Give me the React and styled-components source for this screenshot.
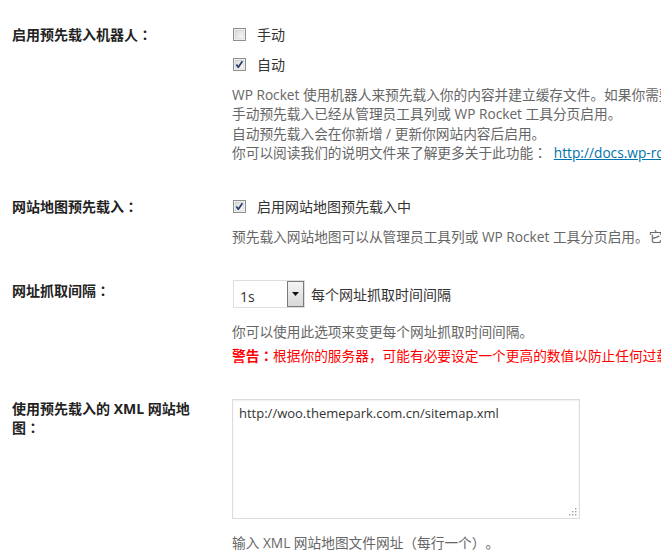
import React from 'react';
import styled, { createGlobalStyle } from 'styled-components';

const GlobalStyle = createGlobalStyle`
  html, body {
    margin: 0;
    padding: 0;
    background: #fff;
    overflow: hidden;
  }
  body {
    font-family: "Open Sans", "Noto Sans CJK SC", sans-serif;
    color: #333;
    text-spacing-trim: space-all;
  }
`;

const Page = styled.div`
  width: 661px;
  height: 558px;
  overflow: hidden;
  box-sizing: border-box;
  padding: 24px 0 0 12px;
`;

const Form = styled.div`
  display: flex;
  flex-direction: column;
  gap: 34px;
  width: 960px;
`;

const Row = styled.div`
  display: grid;
  grid-template-columns: 220px 1fr;
  align-items: start;
`;

const Label = styled.div`
  width: 182px;
  padding-top: 1px;
  font-size: 14px;
  line-height: 18px;
  font-weight: 700;
  color: #222;
`;

/* full-width colon drawn centred in its cell */
const Colon = styled.span`
  font-family: "Noto Sans CJK JP", "Noto Sans CJK SC", sans-serif;
`;

const Field = styled.div`
  display: flex;
  flex-direction: column;
`;

const Options = styled.div`
  display: flex;
  flex-direction: column;
  gap: 10px;
`;

const Option = styled.label`
  display: flex;
  align-items: center;
  gap: 11px;
  height: 20px;
  font-size: 14px;
  color: #333;
  padding-left: 1px;
`;

const Box = styled.svg`
  flex: none;
  display: block;
`;

const Checkbox = ({ checked }) => (
  <Box width="13" height="13" viewBox="0 0 13 13">
    <defs>
      <linearGradient id="cbfill" x1="0" y1="0" x2="1" y2="1">
        <stop offset="0" stopColor="#d9d9d9" />
        <stop offset="1" stopColor="#fbfbfb" />
      </linearGradient>
    </defs>
    <rect x="0.5" y="0.5" width="12" height="12" fill="#fff" stroke="#8e8f8f" />
    <rect x="2" y="2" width="9" height="9" fill="url(#cbfill)" stroke="#c4c4c4" strokeWidth="0.6" />
    {checked && (
      <path d="M3.4 6.4 L5.3 9.2 L9.4 3.2" fill="none" stroke="#2c3c72" strokeWidth="1.7" strokeLinejoin="round" />
    )}
  </Box>
);

const Notes = styled.div`
  display: flex;
  flex-direction: column;
  margin-top: ${(p) => p.$top || 11}px;
`;

const Note = styled.p`
  margin: 0;
  font-size: 13.7px;
  line-height: 19.3px;
  color: #666;
  white-space: nowrap;
`;

const Warning = styled(Note)`
  margin-top: 4px;
  color: #f00;
`;

const Strong = styled.strong`
  font-weight: 700;
`;

const Link = styled.a`
  color: #0073aa;
  text-decoration: underline;
  margin-left: 7px;
`;

const Inline = styled.div`
  display: flex;
  align-items: center;
  gap: 6px;
  font-size: 14px;
  color: #333;
`;

const Select = styled.div`
  display: flex;
  width: 72px;
  height: 28px;
  box-sizing: border-box;
  border: 1px solid #dedede;
  background: #fff;
  margin-left: 1px;
`;

const SelectValue = styled.span`
  flex: 1;
  padding: 6px 0 0 6px;
  font-size: 14px;
  line-height: 20px;
  color: #333;
`;

const SelectButton = styled.span`
  width: 17px;
  box-sizing: border-box;
  border: 1px solid #7a7a7a;
  background: linear-gradient(#f4f4f4, #d8d8d8);
  display: flex;
  align-items: center;
  justify-content: center;
`;

const TextWrap = styled.div`
  position: relative;
  width: 348px;
  height: 120px;
`;

const TextArea = styled.textarea`
  display: block;
  width: 100%;
  height: 100%;
  box-sizing: border-box;
  margin: 0;
  padding: 3px 6px;
  border: 1px solid #dcdcdc;
  box-shadow: inset 0 1px 2px rgba(0, 0, 0, 0.07);
  resize: none;
  outline: none;
  font-family: "Open Sans", "Noto Sans CJK SC", sans-serif;
  font-size: 13px;
  line-height: 20px;
  color: #333;
  background: #fff;
`;

const Grip = styled.svg`
  position: absolute;
  right: 3px;
  bottom: 3px;
`;

export default function App() {
  return (
    <>
      <GlobalStyle />
      <Page>
        <Form>
          <Row>
            <Label>启用预先载入机器人<Colon>：</Colon></Label>
            <Field>
              <Options>
                <Option>
                  <Checkbox />
                  手动
                </Option>
                <Option>
                  <Checkbox checked />
                  自动
                </Option>
              </Options>
              <Notes>
                <Note>WP Rocket 使用机器人来预先载入你的内容并建立缓存文件。如果你需要，可以停用此功能。</Note>
                <Note>手动预先载入已经从管理员工具列或 WP Rocket 工具分页启用。</Note>
                <Note>自动预先载入会在你新增 / 更新你网站内容后启用。</Note>
                <Note>
                  你可以阅读我们的说明文件来了解更多关于此功能<Colon>：</Colon>
                  <Link href="#">http://docs.wp-rocket.me/article/8-preload-cache</Link>
                </Note>
              </Notes>
            </Field>
          </Row>

          <Row>
            <Label>网站地图预先载入<Colon>：</Colon></Label>
            <Field>
              <Options>
                <Option>
                  <Checkbox checked />
                  启用网站地图预先载入中
                </Option>
              </Options>
              <Notes>
                <Note>预先载入网站地图可以从管理员工具列或 WP Rocket 工具分页启用。它会读取下方的网站地图。</Note>
              </Notes>
            </Field>
          </Row>

          <Row>
            <Label>网址抓取间隔<Colon>：</Colon></Label>
            <Field>
              <Inline>
                <Select>
                  <SelectValue>1s</SelectValue>
                  <SelectButton>
                    <svg width="7" height="4" viewBox="0 0 7 4">
                      <path d="M0 0 H7 L3.5 4 Z" fill="#111" />
                    </svg>
                  </SelectButton>
                </Select>
                每个网址抓取时间间隔
              </Inline>
              <Notes $top={14}>
                <Note>你可以使用此选项来变更每个网址抓取时间间隔。</Note>
                <Warning>
                  <Strong>警告<Colon>：</Colon></Strong>根据你的服务器，可能有必要设定一个更高的数值以防止任何过载。
                </Warning>
              </Notes>
            </Field>
          </Row>

          <Row>
            <Label>使用预先载入的 XML 网站地图<Colon>：</Colon></Label>
            <Field>
              <TextWrap>
                <TextArea defaultValue="http://woo.themepark.com.cn/sitemap.xml" />
                <Grip width="9" height="9" viewBox="0 0 9 9">
                  <g fill="#a0a0a0">
                    <rect x="7" y="1" width="1.4" height="1.4" />
                    <rect x="4" y="4" width="1.4" height="1.4" />
                    <rect x="7" y="4" width="1.4" height="1.4" />
                    <rect x="1" y="7" width="1.4" height="1.4" />
                    <rect x="4" y="7" width="1.4" height="1.4" />
                    <rect x="7" y="7" width="1.4" height="1.4" />
                  </g>
                </Grip>
              </TextWrap>
              <Notes $top={14}>
                <Note>输入 XML 网站地图文件网址（每行一个）。</Note>
              </Notes>
            </Field>
          </Row>
        </Form>
      </Page>
    </>
  );
}
